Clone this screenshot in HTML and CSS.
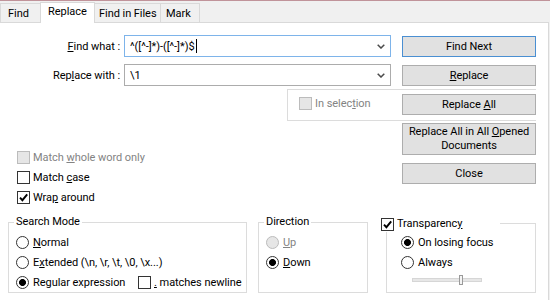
FILE: index.html
```html
<!DOCTYPE html>
<html>
<head>
<meta charset="utf-8">
<link rel="stylesheet" href="styles.css">
</head>
<body>
<div class="topline"></div>
<div class="tabs">
  <div class="tab t-find">Find</div>
  <div class="tab t-replace active">Replace</div>
  <div class="tab t-files">Find in Files</div>
  <div class="tab t-mark">Mark</div>
</div>
<div class="panel">
  <div class="upper">
    <div class="field">
      <span class="flabel"><u>F</u>ind what :</span>
      <div class="combo focus"><span class="ctext">^([^-]*)-([^-]*)$</span><span class="caret"></span><svg class="arrow" viewBox="0 0 8 5"><path d="M0.7 0.7 L4 4 L7.3 0.7" fill="none" stroke="#4a4a4a" stroke-width="1.5"/></svg></div>
    </div>
    <button class="btn default r1">Find Next</button>
    <div class="field r2">
      <span class="flabel">Rep<u>l</u>ace with :</span>
      <div class="combo"><span class="ctext">\1</span><svg class="arrow" viewBox="0 0 8 5"><path d="M0.7 0.7 L4 4 L7.3 0.7" fill="none" stroke="#4a4a4a" stroke-width="1.5"/></svg></div>
    </div>
    <button class="btn r2b"><u>R</u>eplace</button>
    <div class="selbox">
      <div class="chk disabled sel"><span class="box dis"></span><span>In selec<u>t</u>ion</span></div>
      <button class="btn">Replace <u>A</u>ll</button>
    </div>
    <div class="checks">
      <div class="chk disabled"><span class="box dis"></span><span>Match <u>w</u>hole word only</span></div>
      <div class="chk"><span class="box"></span><span>Match <u>c</u>ase</span></div>
      <div class="chk"><span class="box"><svg class="tick" viewBox="0 0 11 11"><path d="M2 5.6 L4.4 8.2 L9.2 2.4" fill="none" stroke="#000" stroke-width="1.9"/></svg></span><span>Wra<u>p</u> around</span></div>
    </div>
    <div class="btncol">
      <button class="btn tall">Replace All in All <u>O</u>pened<br>Documents</button>
      <button class="btn close">Close</button>
    </div>
  </div>
  <div class="groups">
    <fieldset class="grp g-search">
      <legend>Search Mode</legend>
      <div class="gbody">
        <div class="rrow"><span class="rad"></span><span><u>N</u>ormal</span></div>
        <div class="rrow"><span class="rad"></span><span>E<u>x</u>tended (\n, \r, \t, \0, \x...)</span></div>
        <div class="rrow"><span class="rlabel"><span class="rad on"></span><span>Re<u>g</u>ular expression</span></span><span class="chk"><span class="box"></span><span><u>.</u> matches newline</span></span></div>
      </div>
    </fieldset>
    <fieldset class="grp g-dir">
      <legend>Direction</legend>
      <div class="gbody">
        <div class="rrow disabled"><span class="rad dis"></span><span><u>U</u>p</span></div>
        <div class="rrow"><span class="rad on"></span><span><u>D</u>own</span></div>
      </div>
    </fieldset>
    <fieldset class="grp g-trans">
      <legend class="tlegend"><span class="box"><svg class="tick" viewBox="0 0 11 11"><path d="M2 5.6 L4.4 8.2 L9.2 2.4" fill="none" stroke="#000" stroke-width="1.9"/></svg></span><span>Transparenc<u>y</u></span></legend>
      <div class="gbody tbody">
        <div class="rrow"><span class="rad on"></span><span>On losing focus</span></div>
        <div class="rrow"><span class="rad"></span><span>Always</span></div>
        <div class="srow"><div class="slider"><span class="thumb"></span></div></div>
      </div>
    </fieldset>
  </div>
</div>
</body>
</html>
```
FILE: styles.css
```css
* { box-sizing: border-box; }
html, body { margin: 0; height: 100%; }
body {
  background: #f0f0f0;
  font-family: Roboto, "Noto Sans", sans-serif;
  font-size: 11px;
  letter-spacing: -0.05px;
  line-height: 15px;
  color: #000;
  overflow: hidden;
}
u { text-decoration: underline; text-underline-offset: 1px; }

.topline { height: 1px; background: #c0939a; }

.tabs { display: flex; align-items: flex-end; height: 21px; }
.tab {
  height: 19px;
  border: 1px solid #d9d9d9;
  border-bottom: none;
  background: #f0f0f0;
  line-height: 19px;
  white-space: nowrap;
}
.t-find { width: 41px; padding-left: 7px; }
.t-replace { width: 55px; margin-left: -1px; padding-left: 7px; }
.t-files { width: 67px; margin-left: -1px; padding-left: 4px; }
.t-mark { width: 40px; margin-left: -1px; padding-left: 5px; }
.tab.active {
  height: 21px;
  background: #fff;
  margin-bottom: -1px;
  position: relative;
  z-index: 1;
  line-height: 17px;
}

.panel {
  background: #fff;
  border-top: 1px solid #d9d9d9;
  border-right: 1px solid #d9d9d9;
  width: 549px;
  height: 278px;
}

.upper {
  display: grid;
  grid-template-columns: 391px 134px;
  column-gap: 11px;
  padding-top: 12px;
  align-items: start;
}
.field { display: flex; align-items: center; height: 22px; }
.field.r2 { margin-top: 7px; }
.flabel { width: 121px; text-align: right; padding-right: 1px; margin-right: 3px; white-space: nowrap; }
.combo {
  width: 267px;
  height: 22px;
  border: 1px solid #acacac;
  background: #fff;
  display: flex;
  align-items: center;
  padding-left: 5px;
}
.combo.focus { border-color: #7eb4ea; }
.caret { width: 1px; height: 14px; background: #000; margin-left: 1px; }
.arrow { width: 8px; height: 5px; margin-left: auto; margin-right: 5px; }

.btn {
  width: 134px;
  height: 21px;
  border: 1px solid #adadad;
  background: #e1e1e1;
  font: inherit;
  letter-spacing: inherit;
  color: #000;
  padding: 0;
  text-align: center;
  display: block;
}
.btn.default { border-color: #4a8fd2; }
.btn.r1 { margin-top: 1px; }
.btn.r2b { margin-top: 8px; }
.btn.tall { height: 32px; line-height: 14px; }
.btn.close { margin-top: 8px; }

.selbox {
  grid-column: 1 / -1;
  margin-left: 287px;
  margin-top: 3px;
  height: 32px;
  border: 1px solid #dcdcdc;
  border-right: none;
  display: flex;
  justify-content: space-between;
  align-items: flex-start;
  padding: 4px 0 0 11px;
}
.chk.sel { margin-top: 3px; }

.checks {
  display: flex;
  flex-direction: column;
  gap: 7px;
  padding: 30px 0 0 17px;
}
.chk { display: flex; align-items: center; gap: 3px; height: 13px; white-space: nowrap; }
.disabled { color: #838383; }

.box {
  width: 13px;
  height: 13px;
  border: 1px solid #333;
  background: #fff;
  flex: none;
  display: flex;
  align-items: center;
  justify-content: center;
}
.box.dis { border-color: #bcbcbc; background: #e6e6e6; }
.tick { width: 11px; height: 11px; }

.btncol { margin-top: 2px; }

.groups { display: flex; align-items: stretch; padding-left: 8px; margin-top: 10px; }
.grp {
  margin: 0;
  padding: 0;
  border: 1px solid #dcdcdc;
  min-width: 0;
}
.grp legend { padding: 0 2px; margin-left: 5px; line-height: 16px; }
.g-search { width: 239px; }
.g-dir { width: 110px; margin-left: 11px; }
.g-trans { width: 150px; margin-left: 18px; }

.gbody { padding: 2px 0 0 7px; }
.rrow { display: flex; align-items: center; gap: 4px; height: 20px; white-space: nowrap; }
.rlabel { display: flex; align-items: center; gap: 4px; width: 118px; flex: none; }
.rad {
  width: 13px;
  height: 13px;
  border: 1px solid #333;
  border-radius: 50%;
  background: #fff;
  flex: none;
}
.rad.on { background: radial-gradient(circle at center, #000 0 3.1px, #fff 3.8px); }
.rad.dis { border-color: #bcbcbc; background: #e6e6e6; }

.tlegend.tlegend {
  width: 119px;
  margin-left: -6px;
  padding: 2px 0 0 0;
  display: flex;
  align-items: center;
  gap: 3px;
  line-height: 16px;
}
.tbody { padding: 0 0 0 14px; }
.srow { height: 20px; padding: 6px 0 0 11px; }
.slider {
  width: 70px;
  height: 4px;
  border: 1px solid #d6d6d6;
  background: #e7e7e7;
  position: relative;
}
.thumb {
  position: absolute;
  left: 46px;
  top: -4px;
  width: 4px;
  height: 10px;
  border: 1px solid #9a9a9a;
  background: #f4f4f4;
}
```
